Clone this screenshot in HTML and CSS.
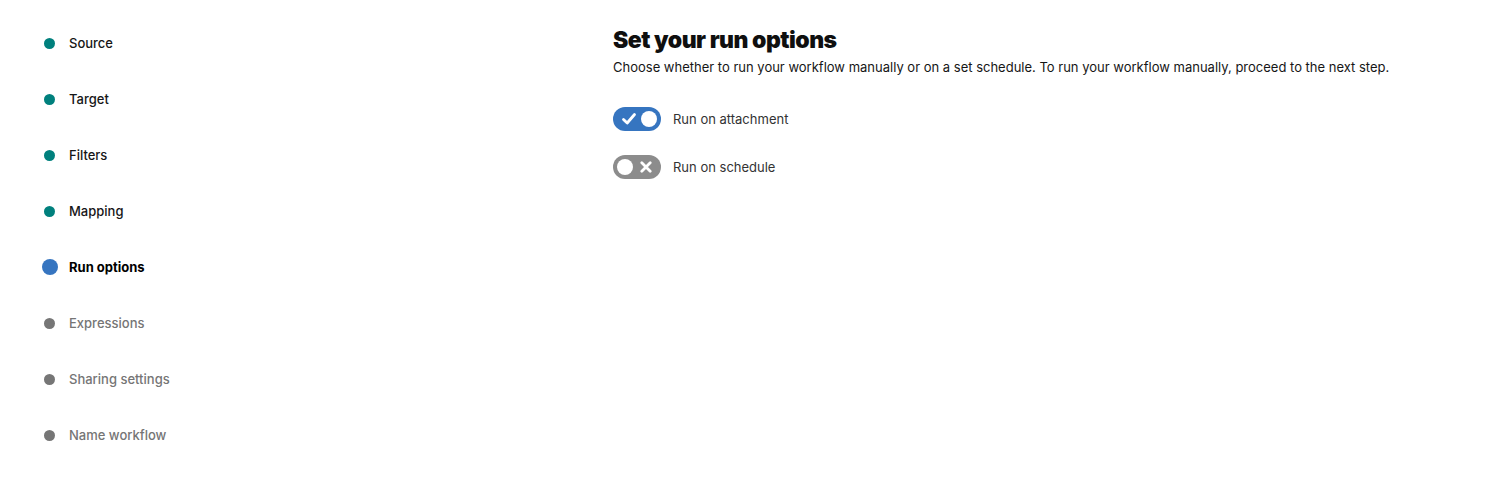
FILE: index.html
```html
<!DOCTYPE html>
<html lang="en">
<head>
    <meta charset="UTF-8">
    <meta name="viewport" content="width=device-width, initial-scale=1.0">
    <title>Set your run options</title>
    <link rel="stylesheet" href="styles.css">
</head>
<body>
    <div class="page">
        <ul class="steps">
            <li class="step done"><span class="dot"></span>Source</li>
            <li class="step done"><span class="dot"></span>Target</li>
            <li class="step done"><span class="dot"></span>Filters</li>
            <li class="step done"><span class="dot"></span>Mapping</li>
            <li class="step active"><span class="dot"></span>Run options</li>
            <li class="step"><span class="dot"></span>Expressions</li>
            <li class="step"><span class="dot"></span>Sharing settings</li>
            <li class="step"><span class="dot"></span>Name workflow</li>
        </ul>

        <div class="content">
            <h1>Set your run options</h1>
            <p class="intro">Choose whether to run your workflow manually or on a set schedule. To run your workflow manually, proceed to the next step.</p>

            <div class="option">
                <span class="toggle on">
                    <svg class="mark" width="16" height="16" viewBox="0 0 16 16">
                        <path d="M2.5 8.5 L6.2 12 L13.5 3.5" fill="none" stroke="#fff" stroke-width="2.8" stroke-linecap="round" stroke-linejoin="round"/>
                    </svg>
                    <span class="knob"></span>
                </span>
                <span class="label">Run on attachment</span>
            </div>
            <div class="option">
                <span class="toggle off">
                    <span class="knob"></span>
                    <svg class="mark" width="12" height="12" viewBox="0 0 12 12">
                        <path d="M1.8 1.8 L10.2 10.2 M10.2 1.8 L1.8 10.2" fill="none" stroke="#fff" stroke-width="2.8" stroke-linecap="round"/>
                    </svg>
                </span>
                <span class="label">Run on schedule</span>
            </div>
        </div>
    </div>
</body>
</html>
```

FILE: styles.css
```css
body {
    margin: 0;
    font-family: Inter, "Noto Sans", Arial, sans-serif;
    color: #161616;
    background: #ffffff;
}
.page {
    display: flex;
    padding: 0 0 0 43px;
}
.steps {
    list-style: none;
    margin: 0;
    padding: 34px 0 0 0;
    width: 570px;
    display: flex;
    flex-direction: column;
    gap: 38px;
}
.step {
    display: flex;
    align-items: center;
    height: 18px;
    font-size: 13px;
    font-weight: 500;
    color: #757575;
}
.dot {
    width: 11px;
    height: 11px;
    border-radius: 50%;
    background: #767676;
    margin: 0 14px 0 1px;
    flex-shrink: 0;
}
.step.done {
    color: #161616;
}
.step.done .dot {
    background: #00807d;
}
.step.active {
    color: #000;
    font-weight: 700;
}
.step.active .dot {
    width: 16px;
    height: 16px;
    margin: 0 11px 0 -1px;
    background: #3675c0;
}
.content {
    padding-top: 26px;
}
h1 {
    margin: 0;
    font-family: Inter, Lato, sans-serif;
    font-size: 23px;
    font-weight: 900;
    letter-spacing: -0.5px;
    color: #0f0f0f;
    line-height: 28px;
}
.intro {
    margin: 4px 0 31px;
    font-size: 13px;
    line-height: 18px;
    color: #161616;
}
.option {
    display: flex;
    align-items: center;
    gap: 12px;
    margin-bottom: 24px;
}
.toggle {
    width: 48px;
    height: 24px;
    border-radius: 12px;
    display: flex;
    align-items: center;
    justify-content: space-between;
    padding: 0 4px 0 8px;
    box-sizing: border-box;
}
.toggle.on {
    background: #3675c0;
}
.toggle.off {
    background: #8c8c8c;
    padding: 0 9px 0 4px;
}
.knob {
    width: 16px;
    height: 16px;
    border-radius: 50%;
    background: #ffffff;
}
.mark {
    display: block;
}
.label {
    font-size: 13px;
    color: #333;
}
```
